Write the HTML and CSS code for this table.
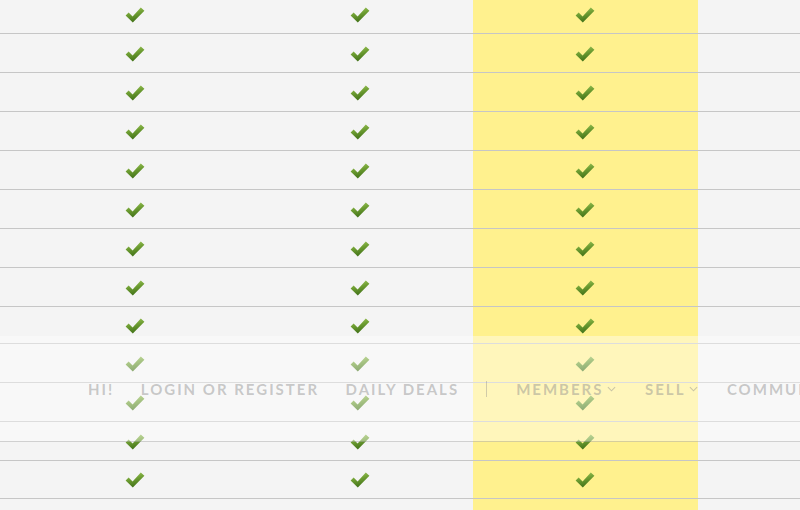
FILE: index.html
```html
<!DOCTYPE html>
<html>
<head>
<meta charset="utf-8">
<link rel="stylesheet" href="styles.css">
</head>
<body>
<svg class="defs" width="0" height="0">
  <defs>
    <linearGradient id="gck" x1="0" y1="0" x2="0.3" y2="1">
      <stop offset="0" stop-color="#a6cc62"/>
      <stop offset="0.5" stop-color="#6e9e32"/>
      <stop offset="1" stop-color="#44741a"/>
    </linearGradient>
    <symbol id="ck" viewBox="0 0 20 17">
      <path d="M0.6 9.6 L3.6 6.6 L7.6 10.4 L15.8 1.6 L19.4 4.8 L7.8 16.4 Z" fill="url(#gck)"/>
    </symbol>
  </defs>
</svg>
<div class="table">
  <div class="row"><div></div><div class="c"><svg class="ck"><use href="#ck"/></svg></div><div class="c"><svg class="ck"><use href="#ck"/></svg></div><div class="c hl"><svg class="ck"><use href="#ck"/></svg></div><div></div></div>
  <div class="row"><div></div><div class="c"><svg class="ck"><use href="#ck"/></svg></div><div class="c"><svg class="ck"><use href="#ck"/></svg></div><div class="c hl"><svg class="ck"><use href="#ck"/></svg></div><div></div></div>
  <div class="row"><div></div><div class="c"><svg class="ck"><use href="#ck"/></svg></div><div class="c"><svg class="ck"><use href="#ck"/></svg></div><div class="c hl"><svg class="ck"><use href="#ck"/></svg></div><div></div></div>
  <div class="row"><div></div><div class="c"><svg class="ck"><use href="#ck"/></svg></div><div class="c"><svg class="ck"><use href="#ck"/></svg></div><div class="c hl"><svg class="ck"><use href="#ck"/></svg></div><div></div></div>
  <div class="row"><div></div><div class="c"><svg class="ck"><use href="#ck"/></svg></div><div class="c"><svg class="ck"><use href="#ck"/></svg></div><div class="c hl"><svg class="ck"><use href="#ck"/></svg></div><div></div></div>
  <div class="row"><div></div><div class="c"><svg class="ck"><use href="#ck"/></svg></div><div class="c"><svg class="ck"><use href="#ck"/></svg></div><div class="c hl"><svg class="ck"><use href="#ck"/></svg></div><div></div></div>
  <div class="row"><div></div><div class="c"><svg class="ck"><use href="#ck"/></svg></div><div class="c"><svg class="ck"><use href="#ck"/></svg></div><div class="c hl"><svg class="ck"><use href="#ck"/></svg></div><div></div></div>
  <div class="row"><div></div><div class="c"><svg class="ck"><use href="#ck"/></svg></div><div class="c"><svg class="ck"><use href="#ck"/></svg></div><div class="c hl"><svg class="ck"><use href="#ck"/></svg></div><div></div></div>
  <div class="row h37"><div></div><div class="c"><svg class="ck"><use href="#ck"/></svg></div><div class="c"><svg class="ck"><use href="#ck"/></svg></div><div class="c hl"><svg class="ck"><use href="#ck"/></svg></div><div></div></div>
  <div class="row"><div></div><div class="c"><svg class="ck"><use href="#ck"/></svg></div><div class="c"><svg class="ck"><use href="#ck"/></svg></div><div class="c hl"><svg class="ck"><use href="#ck"/></svg></div><div></div></div>
  <div class="row"><div></div><div class="c"><svg class="ck"><use href="#ck"/></svg></div><div class="c"><svg class="ck"><use href="#ck"/></svg></div><div class="c hl"><svg class="ck"><use href="#ck"/></svg></div><div></div></div>
  <div class="row"><div></div><div class="c"><svg class="ck"><use href="#ck"/></svg></div><div class="c"><svg class="ck"><use href="#ck"/></svg></div><div class="c hl"><svg class="ck"><use href="#ck"/></svg></div><div></div></div>
  <div class="row h38"><div></div><div class="c"><svg class="ck"><use href="#ck"/></svg></div><div class="c"><svg class="ck"><use href="#ck"/></svg></div><div class="c hl"><svg class="ck"><use href="#ck"/></svg></div><div></div></div>
  <div class="row"><div></div><div class="c"><svg class="ck"><use href="#ck"/></svg></div><div class="c"><svg class="ck"><use href="#ck"/></svg></div><div class="c hl"><svg class="ck"><use href="#ck"/></svg></div><div></div></div>
</div>
<nav class="topbar">
  <span class="item">HI!</span>
  <span class="item">LOGIN OR REGISTER</span>
  <span class="item">DAILY DEALS</span>
  <span class="sep"></span>
  <span class="item">MEMBERS<svg class="chev" viewBox="0 0 10 6"><path d="M1 1 L5 5 L9 1" fill="none" stroke="currentColor" stroke-width="1.2"/></svg></span>
  <span class="item">SELL<svg class="chev" viewBox="0 0 10 6"><path d="M1 1 L5 5 L9 1" fill="none" stroke="currentColor" stroke-width="1.2"/></svg></span>
  <span class="item">COMMUNITY</span>
</nav>
</body>
</html>
```

FILE: styles.css
```css
html, body {
  margin: 0;
  padding: 0;
  background: #f4f4f4;
  overflow: hidden;
  height: 510px;
}
.defs {
  position: absolute;
  width: 0;
  height: 0;
}
.table {
  margin-top: -5px;
}
.row {
  display: grid;
  grid-template-columns: 23px 225px 225px 225px 1fr;
  height: 39px;
  box-sizing: border-box;
  border-bottom: 1px solid #c6c6c6;
}
.row.h37 { height: 37px; }
.row.h38 { height: 38px; }
.c {
  display: flex;
  align-items: center;
  justify-content: center;
}
.hl {
  background: #fff18e;
}
.ck {
  width: 20px;
  height: 17px;
  margin-right: 2px;
}
.topbar {
  position: absolute;
  left: 0;
  top: 336px;
  width: 800px;
  height: 106px;
  box-sizing: border-box;
  border-bottom: 1px solid rgba(0, 0, 0, 0.16);
  background: rgba(255, 255, 255, 0.4);
  display: flex;
  align-items: center;
  padding-left: 88px;
  padding-top: 1px;
  gap: 26.5px;
  white-space: nowrap;
  overflow: hidden;
  font-family: Lato, "Open Sans", sans-serif;
  font-weight: 700;
  font-size: 15px;
  letter-spacing: 2px;
  color: rgba(140, 140, 140, 0.46);
}
.item {
  display: flex;
  align-items: center;
  flex-shrink: 0;
}
.chev {
  width: 9px;
  height: 6px;
  margin-left: 4px;
  margin-right: 2px;
  flex-shrink: 0;
}
.sep {
  flex-shrink: 0;
  width: 1px;
  height: 16px;
  background: rgba(140, 140, 140, 0.4);
  margin-right: 3px;
}
```
